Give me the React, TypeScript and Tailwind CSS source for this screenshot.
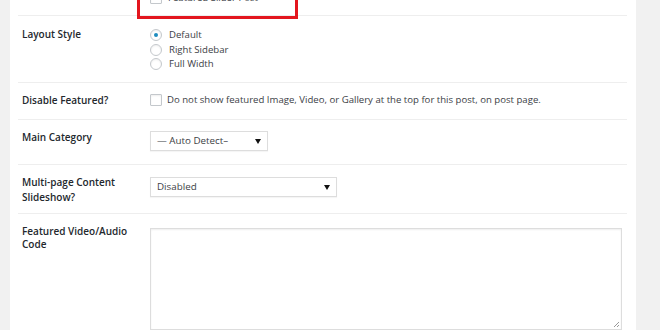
import React from "react";

function Radio({ checked, label }: { checked?: boolean; label: string }) {
  return (
    <div className="flex items-center h-[14.5px]">
      <span className="w-[12px] h-[12px] rounded-full border border-[#c4c8cc] bg-white flex items-center justify-center shadow-[inset_0_1px_2px_rgba(0,0,0,0.07)]">
        {checked && <span className="w-[4px] h-[4px] rounded-full bg-[#1e8cbe]" />}
      </span>
      <span className="ml-[7px] text-[9.6px] leading-[14px] text-[#3c4146]">{label}</span>
    </div>
  );
}

function Checkbox() {
  return (
    <span className="w-[12px] h-[12px] shrink-0 rounded-[1px] border border-[#c4c8cc] bg-white shadow-[inset_0_1px_2px_rgba(0,0,0,0.07)]" />
  );
}

function Select({ text, width }: { text: string; width: string }) {
  return (
    <div
      className={`${width} h-[20px] border border-[#dddddd] bg-white flex items-center justify-between pl-[6px] pr-[6px] shadow-[0_1px_1px_rgba(0,0,0,0.04)]`}
    >
      <span className="text-[9.8px] leading-[14px] text-[#3c4146]">{text}</span>
      <svg width="6" height="5" viewBox="0 0 6 5">
        <path d="M0 0 H6 L3 5 Z" fill="#111" />
      </svg>
    </div>
  );
}

function Label({ children }: { children: React.ReactNode }) {
  return (
    <div className="w-[132px] shrink-0 pl-[4px] text-[10px] leading-[14px] font-semibold text-[#23282d]">
      {children}
    </div>
  );
}

export default function App() {
  return (
    <div className="w-[660px] h-[330px] bg-[#f1f1f1] overflow-hidden flex relative font-['Open_Sans',sans-serif]">
      <div className="ml-[10px] w-[626px] h-[330px] bg-white pl-[8px] pr-[9px] flex flex-col">
        {/* top partial row */}
        <div className="h-[15px] flex items-start">
          <div className="w-[132px] shrink-0" />
          <div className="flex items-center gap-[6px] -mt-[9px]">
            <Checkbox />
            <span className="text-[9.6px] leading-[14px] text-[#3c4146]">Featured Slider Post</span>
          </div>
        </div>

        {/* Layout style */}
        <div className="border-t border-[#eeeeee] h-[67px] flex pt-[11px]">
          <Label>Layout Style</Label>
          <div className="flex flex-col pt-[1px]">
            <Radio checked label="Default" />
            <Radio label="Right Sidebar" />
            <Radio label="Full Width" />
          </div>
        </div>

        {/* Disable featured */}
        <div className="border-t border-[#eeeeee] h-[38px] flex pt-[10px]">
          <Label>Disable Featured?</Label>
          <div className="flex items-center h-[14px] gap-[5px]">
            <Checkbox />
            <span className="text-[9.6px] leading-[14px] text-[#3c4146] whitespace-nowrap">
              Do not show featured Image, Video, or Gallery at the top for this post, on post page.
            </span>
          </div>
        </div>

        {/* Main category */}
        <div className="border-t border-[#eeeeee] h-[45px] flex pt-[10px]">
          <Label>Main Category</Label>
          <div className="pt-[1px]">
            <Select text="— Auto Detect–" width="w-[118px]" />
          </div>
        </div>

        {/* Multi-page */}
        <div className="border-t border-[#eeeeee] h-[49px] flex pt-[10px]">
          <Label>
            <div className="leading-[15px]">Multi-page Content</div>
            <div className="leading-[15px]">Slideshow?</div>
          </Label>
          <div className="pt-[2px]">
            <Select text="Disabled" width="w-[187px]" />
          </div>
        </div>

        {/* Featured video */}
        <div className="border-t border-[#eeeeee] flex-1 flex pt-[11px]">
          <Label>
            <div className="leading-[13px]">Featured Video/Audio</div>
            <div className="leading-[13px]">Code</div>
          </Label>
          <div className="pt-[3px]">
            <div className="w-[472px] h-[102px] border border-[#dddddd] bg-white shadow-[inset_0_1px_2px_rgba(0,0,0,0.07)] relative">
              <svg className="absolute right-[1px] bottom-[1px]" width="7" height="7" viewBox="0 0 7 7">
                <path d="M6 1 L1 6 M6 4 L4 6" stroke="#999" strokeWidth="1" />
              </svg>
            </div>
          </div>
        </div>
      </div>

      {/* red annotation box */}
      <div className="absolute left-[137px] top-[-20px] w-[161px] h-[39px] border-[3px] border-[#e3161e]" />
    </div>
  );
}
